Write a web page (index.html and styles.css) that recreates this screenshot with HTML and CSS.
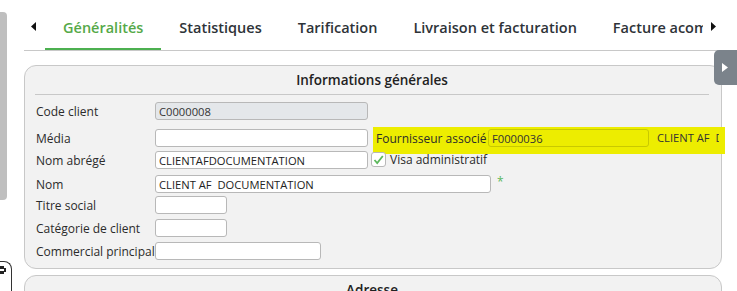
FILE: index.html
```html
<!DOCTYPE html>
<html lang="fr">
<head>
<meta charset="utf-8">
<title>Client</title>
<link rel="stylesheet" href="styles.css">
</head>
<body>
<div class="app">
  <aside class="side">
    <div class="scrollbar"></div>
    <div class="corner-btn">
      <svg width="8" height="12" viewBox="0 0 8 12"><rect x="0" y="1" width="4" height="3" fill="#222"/><rect x="0" y="6" width="4" height="3" fill="#222"/><rect x="4" y="3" width="2" height="4" fill="#222"/></svg>
    </div>
  </aside>
  <main class="main">
    <nav class="tabbar">
      <span class="arrow arrow-left"><svg width="5" height="9" viewBox="0 0 5 9"><polygon points="5,0 5,9 0,4.5" fill="#111"/></svg></span>
      <div class="tabs">
        <span class="tab active">Généralités</span>
        <span class="tab">Statistiques</span>
        <span class="tab">Tarification</span>
        <span class="tab">Livraison et facturation</span>
        <span class="tab">Facture acompte</span>
      </div>
      <span class="arrow arrow-right"><svg width="5" height="9" viewBox="0 0 5 9"><polygon points="0,0 0,9 5,4.5" fill="#111"/></svg></span>
    </nav>
    <div class="side-toggle"><svg width="6" height="9" viewBox="0 0 6 9"><polygon points="0,0 0,9 6,4.5" fill="#fff"/></svg></div>
    <section class="panel">
      <h2 class="panel-title">Informations générales</h2>
      <div class="form">
        <div class="row r1">
          <label class="lbl">Code client</label>
          <input class="inp w-md disabled" value="C0000008" disabled>
        </div>
        <div class="row r2">
          <label class="lbl">Média</label>
          <input class="inp w-md" value="">
          <div class="highlight">
            <label class="hl-lbl">Fournisseur associé</label>
            <input class="inp hl-inp" value="F0000036">
            <span class="hl-name">CLIENT AF&nbsp; DOCUMENTATION</span>
          </div>
        </div>
        <div class="row r3">
          <label class="lbl">Nom abrégé</label>
          <input class="inp w-md" value="CLIENTAFDOCUMENTATION">
          <span class="check"><svg width="13" height="13" viewBox="0 0 13 13"><polyline points="2.5,7 5.2,10 10.8,3" fill="none" stroke="#5cb85c" stroke-width="1.8"/></svg></span>
          <span class="check-lbl">Visa administratif</span>
        </div>
        <div class="row r4">
          <label class="lbl">Nom</label>
          <input class="inp w-lg" value="CLIENT AF  DOCUMENTATION">
          <span class="req">*</span>
        </div>
        <div class="row r5">
          <label class="lbl">Titre social</label>
          <input class="inp w-sm" value="">
        </div>
        <div class="row r6">
          <label class="lbl">Catégorie de client</label>
          <input class="inp w-sm" value="">
        </div>
        <div class="row r7">
          <label class="lbl">Commercial principal</label>
          <input class="inp w-mid" value="">
        </div>
      </div>
    </section>
    <section class="panel">
      <h2 class="panel-title">Adresse</h2>
    </section>
  </main>
</div>
</body>
</html>
```
FILE: styles.css
```css
html, body {
  margin: 0;
  padding: 0;
  width: 737px;
  height: 291px;
  overflow: hidden;
  background: #fff;
  font-family: "Open Sans", "Noto Sans", sans-serif;
  color: #2b2b2b;
}
.app {
  display: flex;
  height: 291px;
}
.side {
  width: 24px;
  flex: none;
  display: flex;
  flex-direction: column;
}
.scrollbar {
  width: 7px;
  height: 188px;
  margin-top: 12px;
  background: #bfbfbf;
  border-radius: 0 4px 4px 0;
}
.corner-btn {
  margin-top: auto;
  width: 12px;
  height: 30px;
  border: 1px solid #333;
  border-left: none;
  border-bottom: none;
  border-radius: 0 8px 0 0;
  box-sizing: border-box;
  padding-top: 3px;
  background: #fff;
}
.corner-btn svg { display: block; }
.main {
  flex: 1;
  position: relative;
  min-width: 0;
}
.tabbar {
  display: flex;
  height: 50px;
  border-bottom: 1px solid #c8c8c8;
}
.arrow {
  display: flex;
  align-items: center;
  padding-top: 3px;
  box-sizing: border-box;
  height: 50px;
}
.arrow-left { width: 21px; padding-left: 7px; }
.arrow-right { width: 34px; padding-left: 8px; }
.tabs {
  display: flex;
  width: 658px;
  overflow: hidden;
  flex: none;
}
.tab {
  flex: none;
  padding: 7px 18px 0;
  height: 51px;
  box-sizing: border-box;
  line-height: 41px;
  font-size: 14.5px;
  font-weight: 600;
  color: #2e3338;
  white-space: nowrap;
  border-bottom: 3px solid transparent;
}
.tab.active {
  color: #55a948;
  border-bottom-color: #4cb050;
}
.side-toggle {
  position: absolute;
  right: 0;
  top: 50px;
  width: 23px;
  height: 35px;
  background: #7b838b;
  border-radius: 5px 0 0 5px;
  display: flex;
  align-items: center;
  padding-left: 8px;
  box-sizing: border-box;
}
.side-toggle svg { display: block; }
.panel {
  margin: 14px 15px 0 0;
  border: 1px solid #c8c8c8;
  border-radius: 12px;
  background: #f2f2f2;
}
.panel + .panel { margin-top: 6px; }
.panel-title {
  margin: 0 12px 0 10px;
  height: 28px;
  line-height: 29px;
  text-align: center;
  font-size: 13.5px;
  font-weight: 600;
  color: #222;
  border-bottom: 1px solid #c8c8c8;
}
.form {
  padding: 7px 0 8px 11px;
}
.row {
  display: flex;
  align-items: flex-start;
}
.r1 { height: 27px; }
.r2 { height: 22px; }
.r3 { height: 24px; }
.r4 { height: 21px; }
.r5 { height: 23px; }
.r6 { height: 23px; }
.r7 { height: 18px; }
.lbl {
  width: 119px;
  flex: none;
  font-size: 12px;
  line-height: 19px;
  color: #2b2b2b;
  white-space: nowrap;
}
.inp {
  box-sizing: border-box;
  height: 18px;
  border: 1px solid #b8b8b8;
  border-radius: 3px;
  background: #fff;
  padding: 0 3px;
  margin: 0;
  font-family: "Open Sans", "Noto Sans", sans-serif;
  font-size: 11.2px;
  color: #222;
  flex: none;
}
.inp.disabled { background: #e4e7ea; color: #333; }
.w-md { width: 213px; }
.w-lg { width: 336px; }
.w-sm { width: 72px; }
.w-mid { width: 166px; }
.highlight {
  flex: none;
  display: flex;
  align-items: flex-start;
  margin: -2px 0 0 5px;
  width: 352px;
  height: 27px;
  padding: 2px 0 0 3px;
  box-sizing: border-box;
  background: #eded00;
  overflow: hidden;
}
.hl-lbl {
  width: 112px;
  flex: none;
  font-size: 12px;
  line-height: 19px;
  color: #2b2b2b;
  white-space: nowrap;
}
.hl-inp {
  width: 161px;
  background: #eded00;
  border-color: #c9c900;
  color: #333;
}
.hl-name {
  margin-left: 8px;
  width: 62px;
  overflow: hidden;
  white-space: nowrap;
  font-size: 11.2px;
  line-height: 18px;
  color: #333;
}
.check {
  flex: none;
  width: 15px;
  height: 15px;
  margin: 1px 0 0 3px;
  box-sizing: border-box;
  border: 1px solid #b8b8b8;
  border-radius: 3px;
  background: #fff;
  display: flex;
  align-items: center;
  justify-content: center;
}
.check svg { display: block; }
.check-lbl {
  margin-left: 4px;
  font-size: 12px;
  line-height: 17px;
  color: #2b2b2b;
  white-space: nowrap;
}
.req {
  margin-left: 6px;
  font-size: 12px;
  line-height: 14px;
  color: #5cb85c;
}
```
